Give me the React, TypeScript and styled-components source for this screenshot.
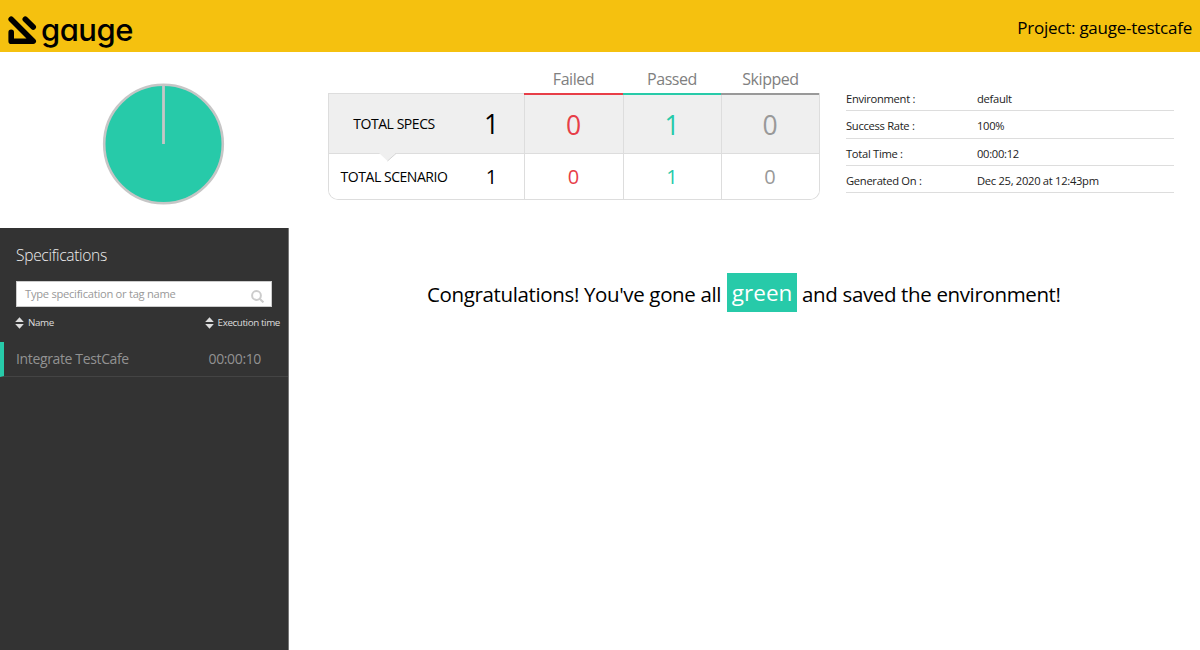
import React from 'react';
import styled, { createGlobalStyle } from 'styled-components';

const GlobalStyle = createGlobalStyle`
  * { box-sizing: border-box; }
  body {
    margin: 0;
    background: #fff;
    color: #000;
    font-family: "Open Sans", sans-serif;
    overflow: hidden;
  }
`;

const colors = {
  brand: '#f5c10f',
  failed: '#e73e48',
  passed: '#27caa9',
  skipped: '#999999',
  line: '#dddddd',
  dark: '#333333',
};

const Page = styled.div`
  height: 650px;
  display: flex;
  flex-direction: column;
`;

const Header = styled.header`
  height: 52px;
  flex: none;
  display: flex;
  justify-content: space-between;
  background: ${colors.brand};
  padding: 0 8px;
`;

const Logo = styled.div`
  display: flex;
  align-items: flex-start;
  padding-top: 16px;
`;

const LogoMark = styled.svg`
  display: block;
  flex: none;
`;

const Wordmark = styled.span`
  font-family: Inter, sans-serif;
  font-feature-settings: "cv11";
  font-weight: 500;
  font-size: 31px;
  line-height: 30px;
  letter-spacing: -0.5px;
  margin-left: 3px;
  margin-top: -1px;
`;

const Project = styled.div`
  font-size: 17px;
  letter-spacing: -0.24px;
  line-height: 56px;
  white-space: nowrap;
`;

const Summary = styled.section`
  height: 175px;
  flex: none;
  display: flex;
`;

const ChartArea = styled.div`
  width: 328px;
  flex: none;
  padding: 29px 0 0 101px;
`;

const Chart = styled.svg`
  display: block;
`;

const Results = styled.div`
  width: 492px;
  flex: none;
  padding-top: 16px;
`;

const Labels = styled.div`
  display: grid;
  grid-template-columns: 196px 99px 98px 99px;
  height: 25px;
  line-height: 22px;
  font-size: 16px;
  letter-spacing: -0.45px;
  color: #808080;
  text-align: center;
`;

const Table = styled.div`
  border: 1px solid ${colors.line};
  border-top: 0;
  border-radius: 0 0 10px 10px;
  overflow: hidden;
  height: 107px;
`;

const ResultRow = styled.div<{ $main?: boolean }>`
  display: grid;
  grid-template-columns: 195px 99px 98px 98px;
  height: ${p => (p.$main ? 61 : 45)}px;
  background: ${p => (p.$main ? '#efefef' : '#fff')};
  border-bottom: ${p => (p.$main ? `1px solid ${colors.line}` : 0)};
  font-size: ${p => (p.$main ? 26.5 : 20)}px;
`;

const TotalCell = styled.div<{ $main?: boolean }>`
  position: relative;
  display: flex;
  align-items: center;
  border-top: ${p => (p.$main ? `1px solid ${colors.line}` : 0)};
`;

const TotalLabel = styled.span`
  width: 130px;
  padding-bottom: 1px;
  text-align: center;
  font-size: 14px;
  letter-spacing: -0.45px;
  white-space: nowrap;
`;

const TotalValue = styled.span`
  width: 65px;
  text-align: center;
`;

const Notch = styled.svg`
  position: absolute;
  left: 50px;
  top: 59px;
  z-index: 1;
`;

const Cell = styled.div<{ $tone: string; $bar?: boolean }>`
  position: relative;
  display: flex;
  align-items: center;
  justify-content: center;
  padding: ${p => (p.$bar ? '3px 1px 0 0' : '0 1px 0 0')};
  color: ${p => p.$tone};
  border-left: 1px solid ${colors.line};

  &::before {
    content: "";
    display: ${p => (p.$bar ? 'block' : 'none')};
    position: absolute;
    top: 0;
    left: -1px;
    right: 0;
    height: 2px;
    background: ${p => p.$tone};
  }
`;

const Info = styled.dl`
  margin: 32px 0 0 26px;
  width: 328px;
`;

const InfoRow = styled.div`
  display: flex;
  height: 27.33px;
  line-height: 30px;
  border-bottom: 1px solid ${colors.line};
  font-size: 11.2px;
  letter-spacing: -0.3px;
  color: #222;
`;

const InfoKey = styled.dt`
  width: 131px;
`;

const InfoValue = styled.dd`
  margin: 0;
`;

const Main = styled.main`
  flex: 1;
  display: flex;
`;

const Sidebar = styled.aside`
  width: 289px;
  flex: none;
  margin-top: 1px;
  background: ${colors.dark};
  border-right: 1px solid #777;
`;

const SidebarTitle = styled.h3`
  margin: 0;
  padding: 15px 0 0 16px;
  height: 53px;
  line-height: 24px;
  font-size: 15.6px;
  letter-spacing: -0.33px;
  font-weight: 300;
  color: #eee;
`;

const Search = styled.div`
  margin-left: 16px;
  width: 256px;
  height: 26px;
  padding: 0 7px 0 8px;
  display: flex;
  justify-content: space-between;
  background: #fff;
  border: 1px solid #ccc;
  font-size: 11.2px;
  letter-spacing: -0.28px;
  line-height: 24px;
  color: #999;
`;

const SearchIcon = styled.svg`
  display: block;
  margin-top: 8px;
`;

const SortBar = styled.div`
  display: flex;
  justify-content: space-between;
  padding: 0 8px 0 15px;
  height: 35px;
  font-size: 9.8px;
  line-height: 31px;
  color: #ddd;
`;

const SortButton = styled.div<{ $spacing: number }>`
  display: flex;
  gap: 4px;
  letter-spacing: ${p => p.$spacing}px;
`;

const SortIcon = styled.svg`
  display: block;
  margin-top: 10px;
`;

const Spec = styled.div`
  display: flex;
  justify-content: space-between;
  height: 35px;
  line-height: 33px;
  padding: 0 27px 0 12px;
  border-left: 4px solid ${colors.passed};
  border-bottom: 1px solid #444;
  color: #929292;
  font-size: 14px;
  letter-spacing: -0.36px;
`;

const Content = styled.section`
  flex: 1;
  display: flex;
  align-items: flex-start;
  padding: 46px 0 0 138px;
`;

const Message = styled.p`
  margin: 0;
  display: flex;
  white-space: pre;
  font-size: 20.5px;
  letter-spacing: -0.36px;
  line-height: 42px;
`;

const Highlight = styled.span`
  margin: 0 5px 0 6px;
  width: 70px;
  height: 39px;
  text-align: center;
  line-height: 40px;
  font-size: 22.5px;
  letter-spacing: 0;
  color: #fff;
  background: ${colors.passed};
`;

function Sort() {
  return (
    <SortIcon width="9" height="12" viewBox="0 0 9 12" fill="#ddd">
      <path d="M0.2 5 4.5 0.2 8.8 5ZM0.2 7h8.6L4.5 11.8Z" />
    </SortIcon>
  );
}

const info = [
  ['Environment :', 'default'],
  ['Success Rate :', '100%'],
  ['Total Time :', '00:00:12'],
  ['Generated On :', 'Dec 25, 2020 at 12:43pm'],
];

export default function App() {
  return (
    <Page>
      <GlobalStyle />
      <Header>
        <Logo>
          <LogoMark width="30" height="30" viewBox="0 0 30 30" fill="none" stroke="#000" strokeWidth="5.6" strokeLinecap="round" strokeLinejoin="round">
            <path d="M3.2 3.2 25.2 25.2H3.2V16.4M17.3 3.2 25.2 11.1" />
          </LogoMark>
          <Wordmark>gauge</Wordmark>
        </Logo>
        <Project>Project: gauge-testcafe</Project>
      </Header>
      <Summary>
        <ChartArea>
          <Chart width="125" height="125" viewBox="0 0 125 125">
            <circle cx="62.5" cy="63" r="59.3" fill={colors.passed} stroke="#c6c6c6" strokeWidth="2.6" />
            <path d="M62.5 3v60" stroke="#c6c6c6" strokeWidth="2.8" />
          </Chart>
        </ChartArea>
        <Results>
          <Labels>
            <span />
            <span>Failed</span>
            <span>Passed</span>
            <span>Skipped</span>
          </Labels>
          <Table>
            <ResultRow $main>
              <TotalCell $main>
                <TotalLabel>TOTAL SPECS</TotalLabel>
                <TotalValue>1</TotalValue>
                <Notch width="18" height="9" viewBox="0 0 18 9">
                  <path d="M0 0H17L8.5 8Z" fill="#efefef" />
                  <path d="M8.5 8 17 0.5" stroke="#d4d4d4" fill="none" />
                </Notch>
              </TotalCell>
              <Cell $tone={colors.failed} $bar>0</Cell>
              <Cell $tone={colors.passed} $bar>1</Cell>
              <Cell $tone={colors.skipped} $bar>0</Cell>
            </ResultRow>
            <ResultRow>
              <TotalCell>
                <TotalLabel>TOTAL SCENARIO</TotalLabel>
                <TotalValue>1</TotalValue>
              </TotalCell>
              <Cell $tone={colors.failed}>0</Cell>
              <Cell $tone={colors.passed}>1</Cell>
              <Cell $tone={colors.skipped}>0</Cell>
            </ResultRow>
          </Table>
        </Results>
        <Info>
          {info.map(([key, value]) => (
            <InfoRow key={key}>
              <InfoKey>{key}</InfoKey>
              <InfoValue>{value}</InfoValue>
            </InfoRow>
          ))}
        </Info>
      </Summary>
      <Main>
        <Sidebar>
          <SidebarTitle>Specifications</SidebarTitle>
          <Search>
            <span>Type specification or tag name</span>
            <SearchIcon width="13" height="13" viewBox="0 0 13 13" fill="none" stroke="#ccc" strokeWidth="2">
              <circle cx="5.5" cy="5.5" r="4.4" />
              <path d="m8.7 8.7 3.7 3.7" />
            </SearchIcon>
          </Search>
          <SortBar>
            <SortButton $spacing={-0.35}><Sort />Name</SortButton>
            <SortButton $spacing={-0.38}><Sort />Execution time</SortButton>
          </SortBar>
          <Spec>
            <span>Integrate TestCafe</span>
            <span>00:00:10</span>
          </Spec>
        </Sidebar>
        <Content>
          <Message>
            <span>Congratulations! You've gone all</span>
            <Highlight>green</Highlight>
            <span>and saved the environment!</span>
          </Message>
        </Content>
      </Main>
    </Page>
  );
}
